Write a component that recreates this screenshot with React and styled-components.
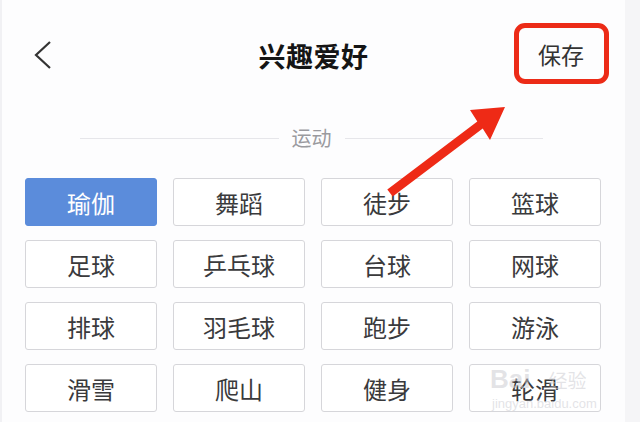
import styled, { createGlobalStyle } from "styled-components";

const GlobalStyle = createGlobalStyle`
  html, body {
    margin: 0;
    padding: 0;
    background: #fcfcfd;
  }
  body {
    font-family: "Noto Sans CJK SC", "Noto Sans", sans-serif;
  }
`;

const Screen = styled.div`
  width: 640px;
  height: 422px;
  display: flex;
  overflow: hidden;
  position: relative;
`;

const Main = styled.div`
  width: 623px;
  border-left: 2px solid #f1f1f4;
  background: #fdfdfe;
  display: flex;
  flex-direction: column;
`;

const RightStrip = styled.div`
  flex: 1;
  background: #f5f5f7;
`;

const Header = styled.div`
  height: 110px;
  display: grid;
  grid-template-columns: 1fr auto 1fr;
  align-items: center;
`;

const Back = styled.div`
  padding-left: 31px;
  display: flex;
  align-items: center;
`;

const Title = styled.h1`
  margin: 0;
  font-size: 27px;
  font-weight: 700;
  color: #151515;
  line-height: 1;
  letter-spacing: 0.5px;
`;

const SaveWrap = styled.div`
  display: flex;
  justify-content: flex-end;
  padding-right: 41px;
`;

const Save = styled.span`
  position: relative;
  font-size: 23px;
  line-height: 1;
  color: #333;
  top: -1px;

  &::after {
    content: "";
    position: absolute;
    top: -20px;
    bottom: -18px;
    left: -24px;
    right: -25px;
    border: 5px solid #ec2b17;
    border-radius: 11px;
  }
`;

const SectionTitle = styled.div`
  margin-top: 18px;
  height: 20px;
  display: flex;
  align-items: center;
  gap: 13px;
  padding-left: 78px;
  width: 463px;
`;

const Line = styled.div`
  flex: 1;
  height: 1px;
  background: #e6e6ea;
`;

const SectionLabel = styled.span`
  font-size: 20px;
  line-height: 20px;
  color: #9a9a9e;
`;

const Grid = styled.div`
  margin-top: 30px;
  padding-left: 23px;
  display: grid;
  grid-template-columns: repeat(4, 132px);
  grid-auto-rows: 48px;
  column-gap: 16px;
  row-gap: 14px;
`;

const Tag = styled.div`
  display: flex;
  align-items: center;
  justify-content: center;
  border-radius: 3px;
  font-size: 24px;
  border: 1px solid ${(p) => (p.$active ? "#5b8cdb" : "#d6d6da")};
  background: ${(p) => (p.$active ? "#5b8cdb" : "#fff")};
  color: ${(p) => (p.$active ? "#fff" : "#3a3a3c")};
`;

const Arrow = styled.svg`
  position: absolute;
  left: 0;
  top: 0;
  pointer-events: none;
`;

const Watermark = styled.div`
  position: absolute;
  left: 490px;
  top: 366px;
  display: flex;
  flex-direction: column;
  align-items: flex-start;
  color: rgba(200, 200, 206, 0.5);
  pointer-events: none;
`;

const MarkTop = styled.div`
  display: flex;
  align-items: center;
  font-family: "Liberation Sans", sans-serif;
  font-size: 26px;
  font-weight: 700;
  line-height: 1;
`;

const MarkCn = styled.span`
  font-family: "Noto Sans CJK SC", sans-serif;
  font-size: 19px;
  font-weight: 400;
  margin-left: 18px;
`;

const MarkUrl = styled.div`
  font-family: "Liberation Sans", sans-serif;
  font-size: 13px;
  margin-top: 4px;
  margin-left: 2px;
`;

const tags = [
  "瑜伽", "舞蹈", "徒步", "篮球",
  "足球", "乒乓球", "台球", "网球",
  "排球", "羽毛球", "跑步", "游泳",
  "滑雪", "爬山", "健身", "轮滑",
];

const App = () => {
  return (
    <>
      <GlobalStyle />
      <Screen>
        <Main>
          <Header>
            <Back>
              <svg width="20" height="30" viewBox="0 0 20 30">
                <polyline
                  points="17,2 3,15 17,28"
                  fill="none"
                  stroke="#333"
                  strokeWidth="2.2"
                />
              </svg>
            </Back>
            <Title>兴趣爱好</Title>
            <SaveWrap>
              <Save>保存</Save>
            </SaveWrap>
          </Header>

          <SectionTitle>
            <Line />
            <SectionLabel>运动</SectionLabel>
            <Line />
          </SectionTitle>

          <Grid>
            {tags.map((t, i) => (
              <Tag key={t} $active={i === 0}>
                {t}
              </Tag>
            ))}
          </Grid>
        </Main>
        <RightStrip />

        <Arrow width="640" height="422">
          <polygon
            points="387.3,189.4 477.3,121.4 470,110 505,107 490,140 482.7,128.6 392.7,196.6"
            fill="#ee2a16"
          />
        </Arrow>

        <Watermark>
          <MarkTop>
            Bai
            <MarkCn>经验</MarkCn>
          </MarkTop>
          <MarkUrl>jingyan.baidu.com</MarkUrl>
        </Watermark>
      </Screen>
    </>
  );
};

export default App;
